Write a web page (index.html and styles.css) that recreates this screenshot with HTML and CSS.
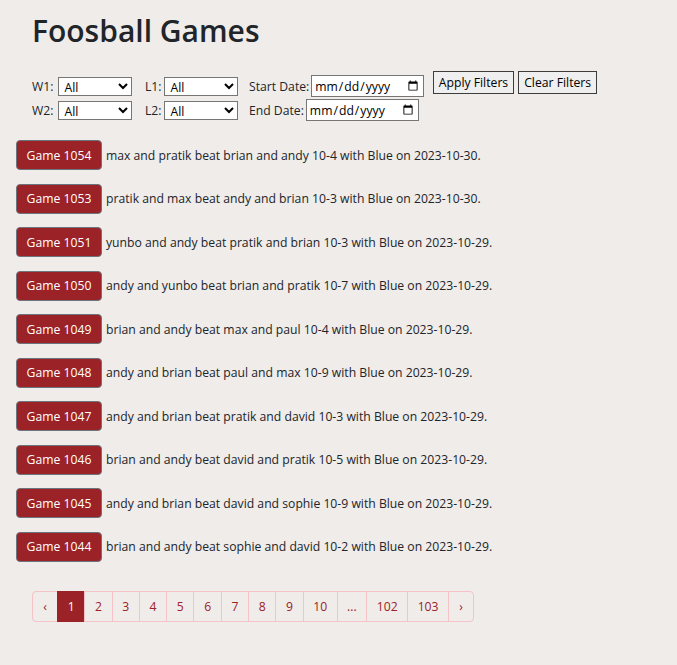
FILE: index.html
```html
<!DOCTYPE html>
<html>
<head>
<meta charset="utf-8">
<title>Foosball Games</title>
<link rel="stylesheet" href="styles.css">
</head>
<body>
<div class="page">
  <h1 class="title">Foosball Games</h1>
  <form class="filters">
    <div class="group group-w">
      <label class="field">W1: <select class="sel"><option>All</option></select></label>
      <label class="field">W2: <select class="sel"><option>All</option></select></label>
    </div>
    <div class="group group-l">
      <label class="field">L1: <select class="sel"><option>All</option></select></label>
      <label class="field">L2: <select class="sel"><option>All</option></select></label>
    </div>
    <div class="group group-d">
      <label class="field">Start Date: <input type="date" class="date"></label>
      <label class="field">End Date: <input type="date" class="date"></label>
    </div>
    <div class="actions">
      <button type="button" class="fbtn">Apply Filters</button>
      <button type="button" class="fbtn">Clear Filters</button>
    </div>
  </form>
  <ul class="games">
    <li class="game"><button class="gbtn">Game 1054</button><span class="desc">max and pratik beat brian and andy 10-4 with Blue on 2023-10-30.</span></li>
    <li class="game"><button class="gbtn">Game 1053</button><span class="desc">pratik and max beat andy and brian 10-3 with Blue on 2023-10-30.</span></li>
    <li class="game"><button class="gbtn">Game 1051</button><span class="desc">yunbo and andy beat pratik and brian 10-3 with Blue on 2023-10-29.</span></li>
    <li class="game"><button class="gbtn">Game 1050</button><span class="desc">andy and yunbo beat brian and pratik 10-7 with Blue on 2023-10-29.</span></li>
    <li class="game"><button class="gbtn">Game 1049</button><span class="desc">brian and andy beat max and paul 10-4 with Blue on 2023-10-29.</span></li>
    <li class="game"><button class="gbtn">Game 1048</button><span class="desc">andy and brian beat paul and max 10-9 with Blue on 2023-10-29.</span></li>
    <li class="game"><button class="gbtn">Game 1047</button><span class="desc">andy and brian beat pratik and david 10-3 with Blue on 2023-10-29.</span></li>
    <li class="game"><button class="gbtn">Game 1046</button><span class="desc">brian and andy beat david and pratik 10-5 with Blue on 2023-10-29.</span></li>
    <li class="game"><button class="gbtn">Game 1045</button><span class="desc">andy and brian beat david and sophie 10-9 with Blue on 2023-10-29.</span></li>
    <li class="game"><button class="gbtn">Game 1044</button><span class="desc">brian and andy beat sophie and david 10-2 with Blue on 2023-10-29.</span></li>
  </ul>
  <nav class="pager">
    <a class="pg arrow">&lsaquo;</a>
    <a class="pg active">1</a>
    <a class="pg">2</a>
    <a class="pg">3</a>
    <a class="pg">4</a>
    <a class="pg">5</a>
    <a class="pg">6</a>
    <a class="pg">7</a>
    <a class="pg">8</a>
    <a class="pg">9</a>
    <a class="pg">10</a>
    <a class="pg gap">...</a>
    <a class="pg">102</a>
    <a class="pg">103</a>
    <a class="pg arrow">&rsaquo;</a>
  </nav>
</div>
</body>
</html>
```
FILE: styles.css
```css
html, body {
  margin: 0;
  background: #f0ece9;
}
body {
  font-family: "Segoe UI", "Open Sans", sans-serif;
  font-size: 12.2px;
  color: #212529;
}
.page {
  padding: 8px 0 0 32px;
}
.title {
  margin: 0 0 17px 0;
  font-size: 30px;
  font-weight: 600;
  line-height: 46px;
  color: #212529;
}
.filters {
  display: flex;
  align-items: flex-start;
  gap: 12.5px;
}
.group {
  display: flex;
  flex-direction: column;
  gap: 2px;
  padding-top: 4px;
}
.field {
  display: flex;
  align-items: center;
  gap: 4px;
  height: 22px;
}
.group-w .field {
  gap: 5px;
}
.group-l .field {
  gap: 3px;
}
.group-d {
  margin-left: -2px;
}
.group-d .field {
  gap: 2px;
}
.sel {
  width: 74px;
  height: 19px;
  box-sizing: border-box;
  font: inherit;
  padding: 0 0 0 1px;
  border: 1px solid #767676;
  background: #fff;
  border-radius: 0;
  color: #000;
}
.date {
  width: 113px;
  height: 22px;
  box-sizing: border-box;
  font: inherit;
  padding: 0 2px;
  border: 1px solid #767676;
  background: #fff;
  color: #000;
}
.actions {
  display: flex;
  gap: 4px;
  margin-left: -4px;
}
.fbtn {
  font: inherit;
  height: 23px;
  padding: 0 5px;
  border: 1px solid #3d3d3d;
  background: #efefef;
  color: #000;
}
.games {
  list-style: none;
  margin: 19px 0 0 -16px;
  padding: 0;
}
.game {
  display: flex;
  align-items: center;
  height: 30px;
  margin-bottom: 13.56px;
}
.gbtn {
  width: 86px;
  height: 30px;
  box-sizing: border-box;
  background: #9b2226;
  color: #fff;
  border: 1px solid #6c757d;
  border-radius: 4px;
  font: inherit;
  padding: 0;
  margin-right: 4px;
}
.desc {
  white-space: nowrap;
}
.pager {
  display: flex;
  margin-top: 29px;
}
.pg {
  display: flex;
  align-items: center;
  justify-content: center;
  height: 31px;
  box-sizing: border-box;
  padding: 0 9.5px;
  border: 1px solid #f4c2c7;
  margin-left: -1px;
  color: #9b2226;
  min-width: 28.3px;
}
.pg:first-child {
  margin-left: 0;
  border-radius: 4px 0 0 4px;
}
.pg:last-child {
  border-radius: 0 4px 4px 0;
}
.pg.active {
  background: #9b2226;
  border-color: #9b2226;
  color: #fff;
}
.arrow {
  min-width: 26px;
  padding: 0 9px;
}
```
